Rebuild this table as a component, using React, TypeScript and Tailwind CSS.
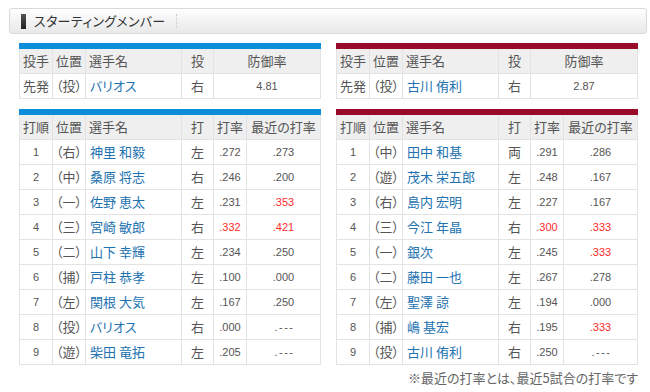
import React from "react";

const JP = "[font-family:'Noto_Sans_CJK_JP','Noto_Sans',sans-serif] [font-feature-settings:'palt']";

type Bat = [string, string, string, string, string, string, boolean, boolean];

const leftBat: Bat[] = [
  ["1", "（右）", "神里 和毅", "左", ".272", ".273", false, false],
  ["2", "（中）", "桑原 将志", "右", ".246", ".200", false, false],
  ["3", "（一）", "佐野 恵太", "左", ".231", ".353", false, true],
  ["4", "（三）", "宮崎 敏郎", "右", ".332", ".421", true, true],
  ["5", "（二）", "山下 幸輝", "左", ".234", ".250", false, false],
  ["6", "（捕）", "戸柱 恭孝", "左", ".100", ".000", false, false],
  ["7", "（左）", "関根 大気", "左", ".167", ".250", false, false],
  ["8", "（投）", "バリオス", "右", ".000", ".---", false, false],
  ["9", "（遊）", "柴田 竜拓", "左", ".205", ".---", false, false],
];

const rightBat: Bat[] = [
  ["1", "（中）", "田中 和基", "両", ".291", ".286", false, false],
  ["2", "（遊）", "茂木 栄五郎", "左", ".248", ".167", false, false],
  ["3", "（右）", "島内 宏明", "左", ".227", ".167", false, false],
  ["4", "（三）", "今江 年晶", "右", ".300", ".333", true, true],
  ["5", "（一）", "銀次", "左", ".245", ".333", false, true],
  ["6", "（二）", "藤田 一也", "左", ".267", ".278", false, false],
  ["7", "（左）", "聖澤 諒", "左", ".194", ".000", false, false],
  ["8", "（捕）", "嶋 基宏", "右", ".195", ".333", false, true],
  ["9", "（投）", "古川 侑利", "右", ".250", ".---", false, false],
];

const cell = "flex items-center border-r border-[#e3e3e3] h-full";
const num = "[font-family:'Liberation_Sans',Arial,sans-serif] text-[11px] text-[#555]";

function PitcherTable({ bar, name, era }: { bar: string; name: string; era: string }) {
  return (
    <div className="w-[302px]">
      <div className={`h-[6px] ${bar}`} />
      <div className="border-l border-r border-b border-[#e3e3e3]">
        <div className={`grid grid-cols-[33px_33px_96px_32px_106px] h-[25px] bg-[#efefef] border-b border-[#e3e3e3] text-[13px] text-[#555] ${JP}`}>
          <div className={`${cell} justify-center`}>投手</div>
          <div className={`${cell} justify-center`}>位置</div>
          <div className={`${cell} pl-[3px]`}>選手名</div>
          <div className={`${cell} justify-center`}>投</div>
          <div className="flex items-center justify-center h-full">防御率</div>
        </div>
        <div className={`grid grid-cols-[33px_33px_96px_32px_106px] h-[24px] bg-white text-[13px] text-[#555] ${JP}`}>
          <div className={`${cell} justify-center`}>先発</div>
          <div className={`${cell} justify-center`}>（投）</div>
          <div className={`${cell} pl-[4px] text-[#2272b0]`}>{name}</div>
          <div className={`${cell} justify-center`}>右</div>
          <div className={`flex items-center justify-center h-full ${num}`}>{era}</div>
        </div>
      </div>
    </div>
  );
}

function BatTable({ bar, rows }: { bar: string; rows: Bat[] }) {
  return (
    <div className="w-[302px]">
      <div className={`h-[6px] ${bar}`} />
      <div className="border-l border-r border-[#e3e3e3]">
        <div className={`grid grid-cols-[33px_33px_96px_32px_33px_73px] h-[25px] bg-[#efefef] border-b border-[#e3e3e3] text-[13px] text-[#555] ${JP}`}>
          <div className={`${cell} justify-center`}>打順</div>
          <div className={`${cell} justify-center`}>位置</div>
          <div className={`${cell} pl-[3px]`}>選手名</div>
          <div className={`${cell} justify-center`}>打</div>
          <div className={`${cell} justify-center`}>打率</div>
          <div className="flex items-center justify-center h-full">最近の打率</div>
        </div>
        {rows.map((r) => (
          <div
            key={r[0]}
            className={`grid grid-cols-[33px_33px_96px_32px_33px_73px] h-[25px] bg-white border-b border-[#e3e3e3] text-[13px] text-[#555] ${JP}`}
          >
            <div className={`${cell} justify-center ${num}`}>{r[0]}</div>
            <div className={`${cell} justify-center`}>{r[1]}</div>
            <div className={`${cell} pl-[4px] text-[#2272b0]`}>{r[2]}</div>
            <div className={`${cell} justify-center`}>{r[3]}</div>
            <div className={`${cell} justify-center ${num} ${r[6] ? "!text-[#ff2b2b]" : ""}`}>{r[4]}</div>
            <div
              className={`flex items-center justify-center h-full ${num} ${r[7] ? "!text-[#ff2b2b]" : ""} ${
                r[5] === ".---" ? "tracking-[1.5px] pl-[2px]" : ""
              }`}
            >
              {r[5]}
            </div>
          </div>
        ))}
      </div>
    </div>
  );
}

export default function App() {
  return (
    <div className="w-[650px] h-[392px] bg-white overflow-hidden pt-[8px] pl-[9px]">
      <div className="w-[638px] h-[26px] rounded-[3px] border border-[#d9d9d9] bg-gradient-to-b from-white via-[#f3f3f3] to-[#e9e9e9] flex items-center pl-[11px]">
        <span className="w-[5px] h-[15px] bg-gradient-to-b from-[#555] to-[#222]" />
        <span className={`ml-[8px] text-[13px] text-[#333] tracking-[0.3px] ${JP}`}>スターティングメンバー</span>
        <span className="ml-[10px] h-[14px] border-l border-dotted border-[#c8c8c8]" />
      </div>
      <div className="pl-[10px] mt-[9px] flex gap-[15px]">
        <PitcherTable bar="bg-[#0d8ed8]" name="バリオス" era="4.81" />
        <PitcherTable bar="bg-[#990b2b]" name="古川 侑利" era="2.87" />
      </div>
      <div className="pl-[10px] mt-[10px] flex gap-[15px]">
        <BatTable bar="bg-[#0d8ed8]" rows={leftBat} />
        <BatTable bar="bg-[#990b2b]" rows={rightBat} />
      </div>
      <div className={`w-[629px] text-right mt-[4px] text-[13px] leading-[18px] text-[#666] ${JP}`}>
        ※最近の打率とは、最近5試合の打率です
      </div>
    </div>
  );
}
